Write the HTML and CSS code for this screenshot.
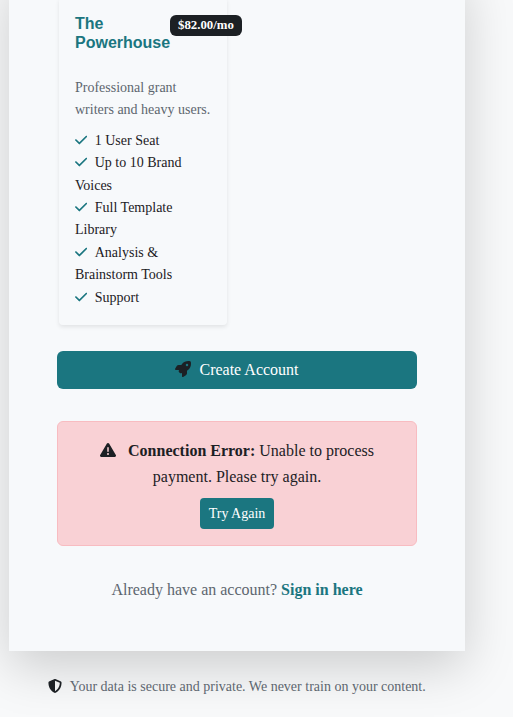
FILE: index.html
```html
<!DOCTYPE html>
<html lang="en">
<head>
<meta charset="utf-8">
<title>Create Account</title>
<link rel="stylesheet" href="styles.css">
</head>
<body>
<svg class="sprite" aria-hidden="true">
  <symbol id="check" viewBox="0 0 448 512"><path d="M438.600 105.400c12.500 12.500 12.500 32.800 0 45.300l-256 256c-12.500 12.500-32.800 12.500-45.300 0l-128-128c-12.500-12.500-12.500-32.800 0-45.300s32.800-12.500 45.300 0L160 338.700 393.400 105.400c12.500-12.500 32.800-12.500 45.300 0z"/></symbol>
</svg>
<main class="panel">
  <section class="plan">
    <div class="plan-head">
      <h2>The Powerhouse</h2>
      <span class="price">$82.00/mo</span>
    </div>
    <p class="plan-desc">Professional grant writers and heavy users.</p>
    <ul class="features">
      <li><svg class="check"><use href="#check"/></svg>1 User Seat</li>
      <li><svg class="check"><use href="#check"/></svg>Up to 10 Brand Voices</li>
      <li><svg class="check"><use href="#check"/></svg>Full Template Library</li>
      <li><svg class="check"><use href="#check"/></svg>Analysis &amp; Brainstorm Tools</li>
      <li><svg class="check"><use href="#check"/></svg>Support</li>
    </ul>
  </section>
  <button class="create" type="button"><svg class="rocket" viewBox="0 0 512 512"><path d="M156.600 384.900L125.700 354c-8.500-8.500-11.500-20.800-7.700-32.200c3-8.900 7-20.500 11.800-33.800L24 288c-8.600 0-16.600-4.600-20.900-12.100s-4.200-16.700 .2-24.100l52.500-88.500c13-21.900 36.500-35.300 61.900-35.300l82.300 0c2.400-4 4.800-7.700 7.200-11.300C289.100-4.100 411.100-8.100 483.900 5.300c11.600 2.100 20.600 11.200 22.800 22.800c13.400 72.900 9.300 194.800-111.400 276.700c-3.500 2.400-7.300 4.800-11.300 7.200v82.300c0 25.400-13.400 49-35.300 61.900l-88.500 52.500c-7.400 4.400-16.600 4.500-24.100 .2s-12.100-12.200-12.100-20.900V380.800c-14.100 4.900-26.400 8.900-35.700 11.900c-11.200 3.600-23.400 .5-31.800-7.800zM384 168a40 40 0 1 0 0-80 40 40 0 1 0 0 80z"/></svg>Create Account</button>
  <div class="alert">
    <p><svg class="warning" viewBox="0 0 512 512"><path d="M256 32c14.200 0 27.300 7.500 34.500 19.800l216 368c7.300 12.400 7.300 27.700 .2 40.100S486.300 480 472 480H40c-14.300 0-27.600-7.700-34.700-20.100s-7-27.800 .2-40.100l216-368C228.700 39.500 241.800 32 256 32zm0 128c-13.300 0-24 10.700-24 24V296c0 13.300 10.700 24 24 24s24-10.700 24-24V184c0-13.300-10.700-24-24-24zm32 224a32 32 0 1 0-64 0 32 32 0 1 0 64 0z"/></svg><strong>Connection Error:</strong> Unable to process payment. Please try again.</p>
    <button class="retry" type="button">Try Again</button>
  </div>
  <p class="signin">Already have an account? <a href="#">Sign in here</a></p>
</main>
<footer><svg class="shield" viewBox="0 0 512 512"><path d="M256 0c4.600 0 9.200 1 13.400 2.900L457.700 82.800c22 9.300 38.400 31 38.300 57.200c-.5 99.200-41.300 280.700-213.600 363.200c-16.700 8-36.100 8-52.800 0C57.300 420.700 16.500 239.200 16 140c-.1-26.200 16.300-47.900 38.300-57.200L242.700 2.900C246.800 1 251.400 0 256 0zm0 66.800V444.800C394 378 431.100 230.100 432 141.400L256 66.800z"/></svg>Your data is secure and private. We never train on your content.</footer>
</body>
</html>
```

FILE: styles.css
```css
* { box-sizing: border-box; }

body {
  margin: 0;
  height: 717px;
  overflow: hidden;
  background: #f8f9fa;
  color: #1c2024;
  font: 16px/1.6 "Liberation Serif", "Times New Roman", serif;
}

p, h2, ul { margin: 0; padding: 0; }
svg { fill: currentColor; }
.sprite { display: none; }

.panel {
  width: 456px;
  height: 681px;
  margin: -30px 0 0 9px;
  padding: 28px 48px 0;
  background: #f7f9fb;
  box-shadow: 0 16px 48px rgba(0, 0, 0, .175);
}

.plan {
  width: 168px;
  height: 327px;
  margin-left: 2px;
  padding: 16px;
  border-radius: 4px;
  box-shadow: 0 2px 4px rgba(0, 0, 0, .09);
}

.plan-head {
  display: flex;
  align-items: flex-start;
  height: 63px;
}

h2 {
  width: 95px;
  flex: none;
  color: #1b7680;
  font: bold 16px/19.2px "Liberation Sans", Arial, sans-serif;
}

.price {
  flex: none;
  margin-top: 1px;
  padding: 4px 8px;
  border-radius: 6px;
  background: #1c2024;
  color: #fff;
  font-size: 12.8px;
  font-weight: bold;
  line-height: 13px;
}

.plan-desc {
  margin-right: -4px;
  color: #5d666f;
  font-size: 14px;
  line-height: 22.4px;
}

.features {
  margin-top: 8px;
  list-style: none;
  font-size: 14px;
  line-height: 22.4px;
}

.check {
  width: 12.25px;
  height: 14px;
  margin-right: 7.5px;
  color: #1b7680;
  vertical-align: -2px;
}

.create {
  display: block;
  width: 100%;
  height: 38px;
  margin-top: 26px;
  padding: 0;
  border: 0;
  border-radius: 6px;
  background: #1b7680;
  color: #fff;
  font: inherit;
}

.rocket {
  width: 16px;
  height: 16px;
  margin-right: 8px;
  color: #1c2024;
  vertical-align: -2px;
}

.alert {
  height: 125px;
  margin-top: 32px;
  padding: 16px;
  border: 1px solid #f8bcc1;
  border-radius: 6px;
  background: #f9d1d5;
  text-align: center;
}

.alert p { padding: 0 20px; }

.warning {
  width: 16px;
  height: 16px;
  margin-right: 12px;
  vertical-align: -2px;
}

.retry {
  display: block;
  width: 74px;
  height: 31px;
  margin: 9px auto 0;
  padding: 0;
  border: 0;
  border-radius: 4px;
  background: #1b7680;
  color: #fff;
  font: 14px/21px "Liberation Serif", "Times New Roman", serif;
}

.signin {
  margin-top: 31px;
  color: #5d666f;
  text-align: center;
}

.signin a {
  color: #1b7680;
  font-weight: bold;
  text-decoration: none;
}

footer {
  position: relative;
  width: 456px;
  margin: 25px 0 0 9px;
  color: #5d666f;
  font-size: 14px;
  line-height: 22.4px;
  text-align: center;
}

.shield {
  width: 14px;
  height: 14px;
  margin-right: 7.500px;
  color: #1c2024;
  vertical-align: -2px;
}
```
